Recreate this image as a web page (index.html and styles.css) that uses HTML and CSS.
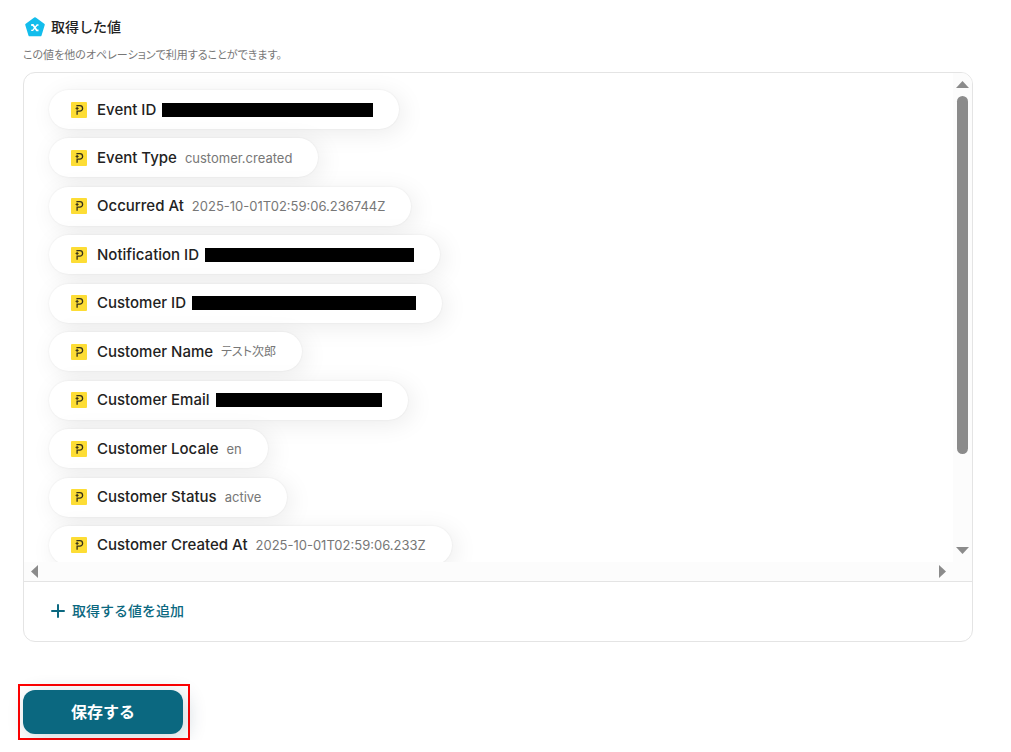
FILE: index.html
```
<!DOCTYPE html>
<html lang="ja">
<head>
  <meta charset="UTF-8">
  <meta name="viewport" content="width=device-width, initial-scale=1.0">
  <title>取得した値</title>
  <link rel="stylesheet" href="styles.css">
</head>
<body>

  <!-- チップ用アイコン -->
  <svg class="sprite" aria-hidden="true">
    <symbol id="paddle" viewBox="0 0 16 16">
      <rect width="16" height="16" rx="1" fill="#fddd35"/>
      <path d="M5.4 3.6H8.8a2.8 2.8 0 0 1 0 5.6H6.1V12.8" fill="none" stroke="#35301a" stroke-width="1.3"/>
      <path d="M6.1 4.8Q6.3 6.2 7.7 6.4Q6.3 6.6 6.1 8Q5.9 6.6 4.5 6.4Q5.9 6.2 6.1 4.8Z" fill="#35301a" stroke="#35301a" stroke-width="0.4"/>
    </symbol>
  </svg>

  <main class="page">
    <h1 class="title">
      <svg class="title-icon" viewBox="0 0 20 20" aria-hidden="true">
        <path d="M10 1.5L18.5 7.7L15.3 18H4.7L1.5 7.7Z" fill="#13bdec" stroke="#13bdec" stroke-width="2.6" stroke-linejoin="round"/>
        <path d="M6.2 8H8L11.8 13.4H13.5" fill="none" stroke="#fff" stroke-width="1.8"/>
        <path d="M13.5 8H12.1L7.7 13.4H6.2" fill="none" stroke="#fff" stroke-width="1.3"/>
      </svg>
      取得した値
    </h1>
    <p class="note">この値を他のオペレーションで利用することができます。</p>

    <section class="panel">
      <div class="scroll">
        <div class="view">
          <ul class="list">
            <li class="chip"><svg class="icon"><use href="#paddle"/></svg><span class="name">Event ID</span><span class="mask event-id"></span></li>
            <li class="chip"><svg class="icon"><use href="#paddle"/></svg><span class="name">Event Type</span><span class="value">customer.created</span></li>
            <li class="chip"><svg class="icon"><use href="#paddle"/></svg><span class="name">Occurred At</span><span class="value">2025-10-01T02:59:06.236744Z</span></li>
            <li class="chip"><svg class="icon"><use href="#paddle"/></svg><span class="name">Notification ID</span><span class="mask notification-id"></span></li>
            <li class="chip"><svg class="icon"><use href="#paddle"/></svg><span class="name">Customer ID</span><span class="mask customer-id"></span></li>
            <li class="chip"><svg class="icon"><use href="#paddle"/></svg><span class="name">Customer Name</span><span class="value ja">テスト次郎</span></li>
            <li class="chip"><svg class="icon"><use href="#paddle"/></svg><span class="name">Customer Email</span><span class="mask email"></span></li>
            <li class="chip"><svg class="icon"><use href="#paddle"/></svg><span class="name">Customer Locale</span><span class="value">en</span></li>
            <li class="chip"><svg class="icon"><use href="#paddle"/></svg><span class="name">Customer Status</span><span class="value">active</span></li>
            <li class="chip"><svg class="icon"><use href="#paddle"/></svg><span class="name">Customer Created At</span><span class="value">2025-10-01T02:59:06.233Z</span></li>
          </ul>
        </div>
        <div class="bar-y">
          <svg class="arrow-y" viewBox="0 0 13 7"><path d="M0 7L6.5 0L13 7Z"/></svg>
          <div class="track"><div class="thumb"></div></div>
          <svg class="arrow-y" viewBox="0 0 13 7"><path d="M0 0L6.5 7L13 0Z"/></svg>
        </div>
        <div class="bar-x">
          <svg class="arrow-x" viewBox="0 0 7 13"><path d="M7 0L0 6.5L7 13Z"/></svg>
          <svg class="arrow-x" viewBox="0 0 7 13"><path d="M0 0L7 6.5L0 13Z"/></svg>
        </div>
      </div>
      <div class="footer">
        <button type="button" class="add">
          <svg class="plus" viewBox="0 0 14 14" aria-hidden="true"><path d="M7 1V13M1 7H13" fill="none" stroke="#0b6880" stroke-width="2" stroke-linecap="round"/></svg>
          取得する値を追加
        </button>
      </div>
    </section>

    <div class="highlight">
      <button type="submit" class="save">保存する</button>
    </div>
  </main>

</body>
</html>
```
FILE: styles.css
```
* {
  box-sizing: border-box;
}

body {
  margin: 0;
  background: #fff;
  color: #222;
  font-family: Inter, "Noto Sans CJK JP", sans-serif;
}

button {
  font-family: inherit;
  cursor: pointer;
}

.sprite {
  display: none;
}

.page {
  padding: 16px 38px 0 23px;
}

.title {
  display: flex;
  align-items: center;
  gap: 6px;
  margin: 0;
  padding-left: 2px;
  font-size: 14px;
  line-height: 22px;
  font-weight: 500;
}

.title-icon {
  width: 20px;
  height: 20px;
}

.note {
  margin: 8px 0;
  font-size: 11px;
  line-height: 18px;
  color: #777;
  font-feature-settings: "palt";
}

.panel {
  border: 1px solid #e4e4e4;
  border-radius: 12px;
  overflow: hidden;
}

.scroll {
  display: grid;
  grid-template-columns: 1fr 19px;
  grid-template-rows: 489px 19px;
}

.view {
  padding: 17px 25px 0;
  overflow: hidden;
}

.list {
  display: flex;
  flex-direction: column;
  align-items: flex-start;
  justify-content: space-between;
  height: 475px;
  margin: 0;
  padding: 0;
  list-style: none;
}

.chip {
  display: flex;
  align-items: center;
  height: 39px;
  padding: 0 26px 0 22px;
  border-radius: 20px;
  background: #fff;
  box-shadow: 0 0 2px rgba(0, 0, 0, 0.08), 4px 4px 24px rgba(0, 0, 0, 0.08);
  white-space: nowrap;
}

.icon {
  width: 16px;
  height: 16px;
  margin-right: 10px;
}

.name {
  margin-right: 8px;
  font-size: 15px;
  line-height: 20px;
  font-weight: 500;
}

.value {
  font-size: 13px;
  line-height: 20px;
  color: #777;
}

.ja {
  font-size: 12px;
  font-feature-settings: "palt";
}

/* 伏せ字 */
.mask {
  height: 14px;
  margin-left: -2px;
  background: #000;
}

.event-id {
  width: 211px;
}

.notification-id {
  width: 209px;
}

.customer-id {
  width: 224px;
}

.email {
  width: 166px;
}

.bar-y {
  display: flex;
  flex-direction: column;
  align-items: center;
  grid-row: 1 / 3;
  grid-column: 2;
  padding: 8px 0 27px;
  background: #fcfcfc;
}

.bar-x {
  display: flex;
  align-items: center;
  justify-content: space-between;
  padding: 0 7px;
  background: #fcfcfc;
}

.arrow-y {
  width: 13px;
  height: 7px;
  fill: #8b8b8b;
}

.arrow-x {
  width: 7px;
  height: 13px;
  fill: #8b8b8b;
}

.track {
  flex: 1;
  padding-top: 8px;
}

.thumb {
  width: 11px;
  height: 358px;
  border-radius: 6px;
  background: #8b8b8b;
}

.footer {
  padding: 17px 27px 19px;
  border-top: 1px solid #e4e4e4;
}

.add {
  display: flex;
  align-items: center;
  gap: 7px;
  padding: 0;
  border: 0;
  background: none;
  color: #0b6880;
  font-size: 14px;
  line-height: 23px;
  font-weight: 500;
}

.plus {
  width: 14px;
  height: 14px;
}

.highlight {
  width: 172px;
  margin: 42px 0 0 -5px;
  padding: 4px;
  padding-left: 3px;
  border: 2px solid #f00;
}

.save {
  display: block;
  width: 160px;
  height: 44px;
  padding: 0 0 2px;
  border: 0;
  border-radius: 12px;
  background: #0b6880;
  box-shadow: 4px 4px 20px rgba(11, 50, 80, 0.2);
  color: #fff;
  font-size: 16px;
  font-weight: 700;
}
```
